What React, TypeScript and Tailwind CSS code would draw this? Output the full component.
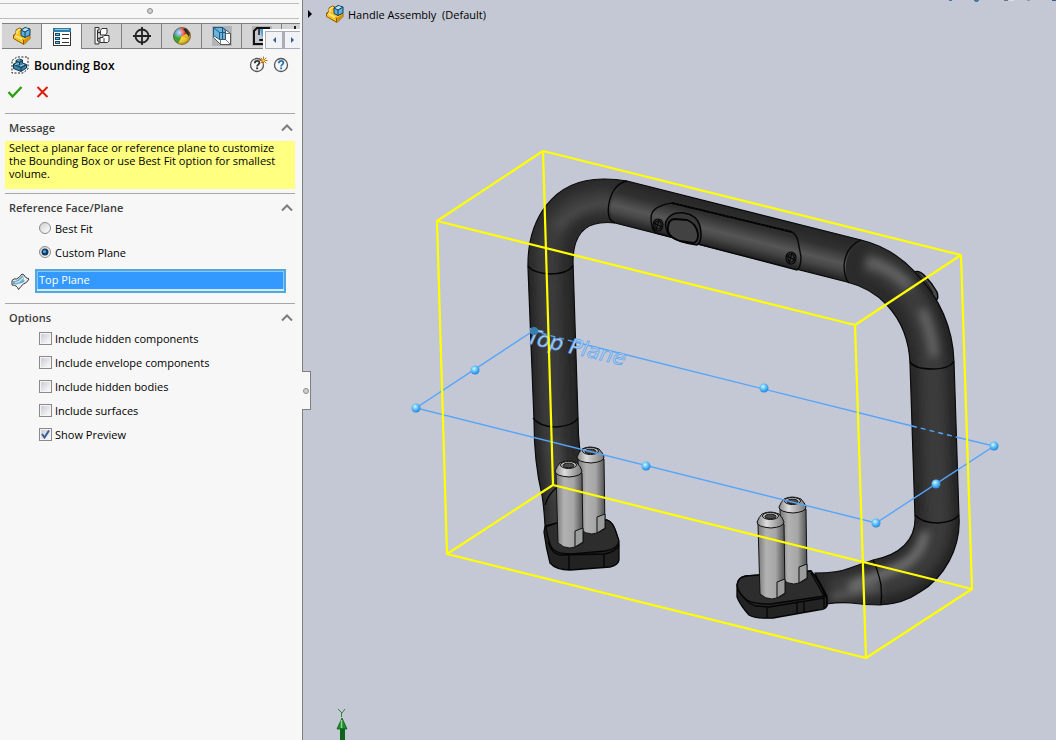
import { useState } from 'react'
import type { ReactNode } from 'react'

const PartIcon = () => (
  <svg className="w-5 h-5" viewBox="0 0 20 20" strokeLinejoin="round">
    <path d="M1.500 9 4 7.500V4L7.500 2 10 3v6l8 .5v3L12 18.500 1.500 12.500z" fill="#fcc41c" stroke="#8a5c08" />
    <path d="M2 9l9.500 5v4" fill="none" stroke="#8a5c08" />
    <path d="M12 14l5.500-4v2.500L12 17.500z" fill="#d8900c" />
    <path d="M3 9.500l7.500 4M5 8V5l3-2" fill="none" stroke="#ffe98a" strokeWidth="1.500" />
    <path d="M9 4 13 1.500 18 3v6L13 11.500 9 9.500z" fill="#5fb0dc" stroke="#123f5c" />
    <path d="M9.500 4.500 13.500 2l4 1.500-4.500 2z" fill="#b9e2f5" />
    <path d="M9 4l4 2 5-3M13 6v5.500" fill="none" stroke="#123f5c" />
  </svg>
)

const PropertyIcon = () => (
  <svg className="w-5 h-5" viewBox="0 0 20 20" shapeRendering="crispEdges">
    <rect x="1.500" y="1.500" width="17" height="17" fill="#fff" stroke="#333" />
    <rect x="1" y="1" width="18" height="4" fill="#2e7ea8" />
    <path d="M3 2.500h14" stroke="#8fc6e0" />
    <path d="M3.500 6.500h4v2h-4zM3.500 10.500h4v2h-4zM3.500 14.500h4v2h-4z" fill="#6fb4d6" stroke="#15506f" />
    <path d="M10 7.500h7M10 11.500h7M10 15.500h7" stroke="#333" />
  </svg>
)

const ConfigIcon = () => (
  <svg className="w-5 h-5" viewBox="0 0 20 20" fill="#fff" stroke="#333">
    <path d="M3 1.500h4v2.500H5.500V15H7v3H3z" fill="#eee" />
    <path d="M5.500 6.500h4M5.500 12.500h4" fill="none" strokeWidth="1.500" />
    <path d="M8.500 4.500 10 2.500h5v4.500L13.500 9h-5z" />
    <path d="M10.500 11l1.500-1.500h5V15l-1.500 1.500h-5z" />
    <path d="M8 11.500h3l1 1v4H8z" />
  </svg>
)

const TargetIcon = () => (
  <svg className="w-5 h-5" viewBox="0 0 20 20" fill="none" stroke="#222" strokeWidth="1.800">
    <circle cx="10" cy="10" r="6.500" />
    <path d="M10 1v18M1 10h18" />
  </svg>
)

const AppearanceIcon = () => (
  <svg className="w-5 h-5" viewBox="0 0 20 20">
    <defs>
      <radialGradient id="shine" cx=".35" cy=".3" r=".75">
        <stop offset="0" stopColor="#fff" stopOpacity=".75" />
        <stop offset=".5" stopColor="#fff" stopOpacity="0" />
        <stop offset="1" stopColor="#000" stopOpacity=".4" />
      </radialGradient>
    </defs>
    <circle cx="10" cy="10" r="8.500" fill="#e02020" />
    <path d="M10 10 1.500 8A8.500 8.500 0 0 0 6 17.500z" fill="#2fa02f" />
    <path d="M10 10 6 17.500A8.500 8.500 0 0 0 18 13z" fill="#f4d020" />
    <path d="M10 10 1.500 9A8.500 8.500 0 0 1 8 1.700z" fill="#2d7fc4" />
    <path d="M10 10l8 3a8.500 8.500 0 0 0 0-7z" fill="#e8b81c" />
    <path d="M10 9 8 1.700A8.500 8.500 0 0 1 16 4z" fill="#e23a20" />
    <path d="M11 3l3-1 4 5-1 4z" fill="#222" />
    <circle cx="10" cy="10" r="8.500" fill="url(#shine)" stroke="#6b5a30" strokeWidth=".6" />
  </svg>
)

const SectionIcon = () => (
  <svg className="w-5 h-5" viewBox="0 0 20 20" strokeLinejoin="round">
    <path d="M0 0h20v20H0z" fill="#b3b4b8" />
    <path d="M1.500 1.500h9l8 6v11h-10l-7-7z" fill="#fff" stroke="#333" strokeWidth=".8" />
    <path d="M1.500 1.500h9l3 3v9h-6l-6-4z" fill="#6db2d8" stroke="#1c5c82" />
    <path d="M1.500 1.500l6 5v7M7.500 6.500h6M10.500 1.500v12" fill="none" stroke="#1c5c82" />
    <path d="M8.500 18.500v-5h5v-6h5M13.500 13.500l5 5" fill="none" stroke="#555" strokeWidth=".8" />
  </svg>
)

const MachineIcon = () => (
  <svg className="w-5 h-5" viewBox="0 0 20 20">
    <path d="M0 0h20v20H0z" fill="#b3b4b8" />
    <path d="M18 2H5L2 5v13h12v-4H8" fill="#c3c9d0" stroke="#111" strokeWidth="2" />
    <path d="M8 3h5v4l-3 4z" fill="#4ea0d8" />
    <path d="M7 3v6M7 14h5" stroke="#111" strokeWidth="1.500" />
  </svg>
)

const BoundingIcon = () => (
  <svg className="w-[18px] h-[18px]" viewBox="0 0 18 18">
    <path d="M1 4.500 6 1h11v12l-5 4H1z" fill="none" stroke="#222" strokeDasharray="2 1.500" />
    <path d="M2.500 8 5 7V4.500L8.500 3l3 1v3l4 1.500V12L10 15.500 2.500 12.500z" fill="#3c82a8" stroke="#12384d" strokeLinejoin="round" />
    <path d="M5 5l3.500 1.500 3-2M8.500 6.500V9M3 8.500l7 3 5-2.500M10 11.500v3.500" fill="none" stroke="#12384d" />
    <path d="M4 8.500l4-1M9 10l4-1.500M6.500 4.500l2-.7" stroke="#9fd0e6" />
  </svg>
)

const HelpIcon = ({ color, spark }: { color: string; spark?: boolean }) => (
  <svg className="w-5 h-5" viewBox="0 0 20 20">
    <circle cx="9" cy="11" r="6.500" fill="#f4f6f8" stroke="#555" strokeWidth="1.300" />
    <path d="M6.800 9.300c0-3.300 4.600-3.100 4.600-.5 0 1.800-2.300 1.800-2.300 3.600" fill="none" stroke={color} strokeWidth="1.800" />
    <path d="M8.200 13.400h1.900v1.800H8.200z" fill={color} />
    {spark && (
      <>
        <path d="M15.500 2.500v8M11.500 6.500h8M12.700 3.700l5.600 5.600M18.300 3.700l-5.600 5.600" stroke="#c8741a" />
        <path d="M14.500 5.500h2v2h-2z" fill="#ffe25a" />
      </>
    )}
  </svg>
)

const FaceIcon = () => (
  <svg className="w-5 h-5" viewBox="0 0 20 20" strokeLinejoin="round">
    <path d="M2 9.500Q4 7 6.500 8Q9 7 12 3L14 4Q15 7 19 8Q17 12 13.500 13Q11 15 8.500 18.500Q7 14 2 14z" fill="#e9eff2" stroke="#333" />
    <path d="M3 10Q6 10 8 8.500Q10 6 12.500 4.500L13.500 6Q13 9 15 10Q12 13 9 12.500Q7 14 3 13z" fill="#6faac8" />
    <path d="M5 11.500Q9 12 13 6.500" fill="none" stroke="#b7dcec" strokeWidth="1.500" />
  </svg>
)

const tabs = [
  { name: 'FeatureManager', icon: <PartIcon /> },
  { name: 'PropertyManager', icon: <PropertyIcon /> },
  { name: 'ConfigurationManager', icon: <ConfigIcon /> },
  { name: 'DimXpertManager', icon: <TargetIcon /> },
  { name: 'DisplayManager', icon: <AppearanceIcon /> },
  { name: 'Section', icon: <SectionIcon /> },
  { name: 'CAM', icon: <MachineIcon /> },
]

const Section = ({ title, children }: { title: string; children: ReactNode }) => {
  const [open, setOpen] = useState(true)

  return (
    <section className="ml-[5px] mr-[7px] border-t border-[#a8a8a8]">
      <button
        type="button"
        onClick={() => setOpen(!open)}
        aria-expanded={open}
        className="flex h-[27px] w-full items-center justify-between pl-1 pr-0.5 text-[11px] font-semibold text-[#3c3c3c]"
      >
        {title}
        <svg className={`w-3 h-3 ${open ? '' : 'rotate-180'}`} viewBox="0 0 12 12" fill="none" stroke="#7c7c7c" strokeWidth="2">
          <path d="M1 8.500l5-5 5 5" />
        </svg>
      </button>
      {open && children}
    </section>
  )
}

const CheckRow = ({ label, defaultChecked }: { label: string; defaultChecked?: boolean }) => (
  <label className="flex h-6 items-center gap-[3px]">
    <span className="grid">
      <input
        type="checkbox"
        defaultChecked={defaultChecked}
        className="peer col-start-1 row-start-1 h-[13px] w-[13px] appearance-none border border-[#8a8a8a] bg-linear-to-br from-[#c5c9ce] to-white shadow-[inset_0_0_0_1px_#f4f4f4]"
      />
      <svg className="pointer-events-none invisible col-start-1 row-start-1 h-[13px] w-[13px] peer-checked:visible" viewBox="0 0 13 13" fill="none" stroke="#3c5a9a" strokeWidth="2">
        <path d="M3 6l2.500 3.500L10 2.500" />
      </svg>
    </span>
    {label}
  </label>
)

const PlaneRadio = ({ label, defaultChecked }: { label: string; defaultChecked?: boolean }) => (
  <label className="flex h-6 items-center gap-1">
    <span className="grid">
      <input
        type="radio"
        name="plane"
        defaultChecked={defaultChecked}
        className="peer col-start-1 row-start-1 h-3 w-3 appearance-none rounded-full border border-[#8a8a8a] bg-linear-to-br from-[#d0d0d0] to-white"
      />
      <svg className="pointer-events-none invisible col-start-1 row-start-1 h-3 w-3 peer-checked:visible" viewBox="0 0 12 12">
        <circle cx="6" cy="6" r="3.500" fill="#123a66" />
        <circle cx="5.500" cy="5.500" r="1.500" fill="#55b0e6" />
      </svg>
    </span>
    {label}
  </label>
)

const Pin = ({ x, y, height }: { x: number; y: number; height: number }) => (
  <g transform={`translate(${x} ${y})`} stroke="#111" strokeLinejoin="round">
    <path d={`M1 12L3 ${height - 4}Q14 ${height + 6} 28 ${height - 4}L27 12z`} fill="url(#steel)" />
    <path d={`M20 ${height - 16}l8-3v14l-8 5z`} fill="#9b9d9d" strokeWidth="1" />
    <path d="M0 10Q2 5 5 2Q13-2 22 2Q26 6 27 10Q27 15 14 16Q0 15 0 10z" fill="url(#steelTop)" />
    <ellipse cx="13.500" cy="4" rx="8" ry="3.500" fill="#c4c4c4" />
    <ellipse cx="13.500" cy="4.500" rx="5.500" ry="2.300" fill="#4b4b4b" />
  </g>
)

const Screw = ({ x, y }: { x: number; y: number }) => (
  <g transform={`translate(${x} ${y})`} fill="none" stroke="#080808" strokeWidth="1.200">
    <ellipse rx="5" ry="6" fill="#3a3a3a" />
    <ellipse rx="3.200" ry="4" />
    <path d="M-4-2l8 4M-2 5l3-10" />
  </g>
)

const tubePath =
  'M528 268C527 222 551 178 605 179Q616 179 627 181L861 240C882 245 900 256 915 272C938 296 953 326 954 362L959 517C961 548 944 578 920 592Q903 604 880 605Q866 605 851 603Q839 602 827 604L815 573Q838 573 850 568Q864 563 873 560C900 555 916 540 915 517L910 363C909 337 899 318 887 305Q871 288 847 282L615 223Q608 222 600 223C583 225 573 238 573 262L578 418Q578 435 580 452L580 530H550L545 525Q544 508 542 495Q534 463 534 420z'

const points = [
  [416, 408], [475, 370], [646, 466], [764, 388], [876, 523], [936, 484], [994, 446],
]

const Model = () => (
  <svg className="h-full w-full" viewBox="303 0 753 740" preserveAspectRatio="xMinYMin meet" role="img" aria-label="Handle assembly with bounding box">
    <defs>
      <linearGradient id="steel">
        <stop offset="0" stopColor="#777" />
        <stop offset=".3" stopColor="#b2b2b2" />
        <stop offset=".65" stopColor="#a6a6a6" />
        <stop offset="1" stopColor="#505050" />
      </linearGradient>
      <linearGradient id="steelTop">
        <stop offset="0" stopColor="#888" />
        <stop offset=".35" stopColor="#ddd" />
        <stop offset="1" stopColor="#777" />
      </linearGradient>
      <linearGradient id="bar" gradientUnits="userSpaceOnUse" x1="745" y1="211" x2="734" y2="254">
        <stop offset="0" stopColor="#262626" />
        <stop offset=".3" stopColor="#303030" />
        <stop offset=".6" stopColor="#565656" />
        <stop offset=".75" stopColor="#474747" />
        <stop offset="1" stopColor="#1e1e1e" />
      </linearGradient>
      <radialGradient id="ball" cx=".4" cy=".35" r=".65">
        <stop offset="0" stopColor="#d4f6ff" />
        <stop offset=".45" stopColor="#68c4fa" />
        <stop offset="1" stopColor="#2186dc" />
      </radialGradient>
      <clipPath id="tube">
        <path d={tubePath} />
      </clipPath>
      <filter id="soft" x="-50%" y="-50%" width="200%" height="200%">
        <feGaussianBlur stdDeviation="4" />
      </filter>
    </defs>

    {/* toolbar icon bottoms */}
    <path d="M949 0h3M974 0h5M975 1h3" stroke="#3e7d9f" strokeWidth="2" />
    <path d="M1004 0h4" stroke="#777" strokeWidth="2" />
    <path d="M1009 0h5" stroke="#dedede" strokeWidth="2" />
    <path d="M1027 0h3" stroke="#999" strokeWidth="2" />
    <path d="M1052 0h4" stroke="#3d5a8c" strokeWidth="2" />

    {/* side button behind the right bend */}
    <path d="M914 272q5-2 10 3q8 8 13 17q2 7-1 8z" fill="#494949" stroke="#080808" strokeWidth="1.500" />
    <path d="M918 273q9 8 15 20" fill="none" stroke="#111" />

    {/* tube */}
    <path d={tubePath} fill="#2b2b2b" />
    <g clipPath="url(#tube)">
      <g fill="none" filter="url(#soft)">
        <path d="M555 540L548 262C547 222 572 200 604 201L620 203M865 262C905 272 928 310 932 365L938 517C938 550 915 580 880 582L830 590" stroke="#3b3b3b" strokeWidth="24" />
        <path d="M556 230Q570 207 604 203L622 206" stroke="#4a4a4a" strokeWidth="8" />
        <path d="M866 262Q890 266 910 287" stroke="#686868" strokeWidth="8" />
        <path d="M922 310Q933 335 934 356" stroke="#6a6a6a" strokeWidth="7" />
        <path d="M924 532Q921 557 895 568L850 587" stroke="#747474" strokeWidth="8" />
        <path d="M830 598L880 588" stroke="#626262" strokeWidth="5" />
        <path d="M553 440L562 500" stroke="#4a4a4a" strokeWidth="10" />
        <path d="M528 268L534 420L545 525M573 255L580 450M910 363L915 517M954 362L959 517" stroke="#222" strokeWidth="8" />
        <path d="M959 517C961 548 944 578 920 592Q903 604 880 605M954 362C953 326 938 296 915 272" stroke="#202020" strokeWidth="10" />
      </g>
      <path d="M627 181L861 240Q841 255 847 282L615 223Q602 205 627 181z" fill="url(#bar)" />
    </g>
    <path d={tubePath} fill="none" stroke="#0b0b0b" strokeWidth="1.200" />
    <g fill="none" stroke="#050505" strokeWidth="1.300">
      <path d="M528 266Q533 273 550 274Q567 274 573 266" />
      <path d="M627 181Q613 184 609 203Q606 220 615 223" />
      <path d="M861 240Q846 246 844 265Q844 278 849 283" />
      <path d="M910 362Q915 369 932 369Q950 369 954 361" />
      <path d="M915 515Q922 523 938 523Q954 522 959 515" />
      <path d="M533 418Q540 427 556 427Q573 426 578 418" />
      <path d="M873 560Q878 570 881 585Q882 596 881 605" />
      <path d="M545 505Q548 495 556 488" />
    </g>

    {/* switch plate */}
    <path d="M651 218Q651 206 672 203L792 232Q796 234 798 241L801 257Q801 267 797 270L656 233Q651 229 651 218z" fill="url(#bar)" stroke="#090909" strokeWidth="1.400" />
    <path d="M672 203L792 232" stroke="#050505" strokeWidth="2" strokeDasharray="3 1" />
    <path d="M666 228Q664 222 669 217Q674 212 684 213Q697 215 700 226Q703 241 697 245Q678 243 668 234z" fill="#383838" stroke="#060606" strokeWidth="1.500" />
    <path d="M668 231Q667 220 674 219L687 220Q696 223 698 234Q698 243 693 243L680 241Q670 238 668 231z" fill="#424242" stroke="#040404" strokeWidth="1.800" />
    <Screw x={658} y={225} />
    <Screw x={791} y={258} />

    {/* left foot */}
    <g stroke="#050505" strokeWidth="1.300" strokeLinejoin="round">
      <path d="M545 526L557 523L607 520Q613 522 616 532L619 543V560Q618 565 610 567L570 570Q556 570 550 563Q546 548 544 532z" fill="#222" />
      <path d="M546 527L557 523L607 520Q613 522 616 532L619 541Q618 549 605 551L572 554Q559 554 554 550Q549 546 546 527z" fill="#2d2d2d" />
      <path d="M548 542Q552 554 560 555L605 554Q617 551 619 545M569 555V570M604 554V567" fill="none" />
    </g>
    <Pin x={577} y={447} height={86} />
    <Pin x={555} y={461} height={86} />

    {/* right foot */}
    <g stroke="#050505" strokeWidth="1.300" strokeLinejoin="round">
      <path d="M737 585Q738 577 746 576L811 571Q823 585 827 599V606Q825 610 818 610L773 618Q755 619 749 615Q740 605 737 597z" fill="#232323" />
      <path d="M737 585Q738 577 746 576L811 571Q821 584 825 596L770 604Q754 604 747 600Q738 593 737 585z" fill="#2d2d2d" />
      <path d="M738 590Q746 603 755 606L769 607L824 598M767 606V618M797 602V614M804 601V613M811 573L824 596V608M815 574L827 596V606" fill="none" />
    </g>
    <Pin x={779} y={497} height={86} />
    <Pin x={757} y={512} height={86} />

    {/* top plane */}
    <g fill="none" stroke="#54a5fb" strokeWidth="1.400">
      <path d="M575 342L912 426M956 437L994 446L876 523L416 408L533 331" />
      <path d="M533 331L575 342M912 426L956 437" strokeDasharray="5 4" />
    </g>
    <text
      transform="translate(526 343) rotate(13)"
      fontFamily="DejaVu Sans, sans-serif"
      fontSize="21"
      fontStyle="italic"
      fill="#b9cfe9"
      stroke="#5aa3ee"
      strokeWidth=".7"
    >
      Top Plane
    </text>
    <circle cx="534" cy="331" r="4" fill="#397fae" />

    {/* bounding box */}
    <path
      d="M543 151L437 221L855 325L961 255zM553 485L447 554L866 658L972 589zM543 151L553 485M437 221L447 554M855 325L866 658M961 255L972 589"
      fill="none"
      stroke="#ff0"
      strokeWidth="2.200"
      strokeLinejoin="round"
    />
    {points.map(([x, y]) => (
      <circle key={x} cx={x} cy={y} r="4.500" fill="url(#ball)" />
    ))}

    {/* origin triad */}
    <path d="M338 709l4 4 3-4M341.500 713v4" fill="none" stroke="#2a8a34" />
    <path d="M340 729h5v11h-5z" fill="#0b6418" />
    <path d="M342 718l5 11h-10z" fill="#1d8a2c" stroke="#0b5a16" strokeWidth=".8" />
    <path d="M341.500 720v8" stroke="#8fd88f" strokeWidth="1.500" />
  </svg>
)

export default function App() {
  const [activeTab, setActiveTab] = useState('PropertyManager')

  return (
    <div className="flex h-screen bg-[#c4c8d4] font-['Open_Sans','Noto_Sans',sans-serif] text-[11px] leading-[13px] text-black">
      <aside className="w-[303px] shrink-0 border-r border-[#7f7f7f] bg-[#f7f7f7]">
        <div className="mr-[3px] h-1 border-b border-[#bcbcbc]" />
        <div className="mr-[3px] flex h-[15px] items-center justify-center border-b border-[#bcbcbc]">
          <span className="h-1.5 w-1.5 rounded-full border border-[#8c8c8c] bg-[#d0d0d0]" />
        </div>

        <div className="relative ml-0.5 mr-0.5 mt-1 overflow-hidden">
          <div role="tablist" className="flex">
            {tabs.map(tab => (
              <button
                key={tab.name}
                type="button"
                role="tab"
                aria-label={tab.name}
                aria-selected={activeTab === tab.name}
                onClick={() => setActiveTab(tab.name)}
                className={`flex h-[26px] w-10 shrink-0 items-center justify-center border-r border-t border-[#808080] ${activeTab === tab.name ? 'bg-[#f7f7f7]' : 'border-b bg-[#d4d4d4]'}`}
              >
                {tab.icon}
              </button>
            ))}
            <div className="flex h-[26px] w-10 shrink-0 border-b border-t border-[#808080] bg-[#d4d4d4] pl-3 pt-0.5">
              <span className="h-2 w-0.5 bg-[#222]" />
            </div>
          </div>
          <div className="absolute right-0 top-1.5 flex h-5 border-l-2 border-t-2 border-white bg-[#a9adb8]">
            <button type="button" aria-label="Previous tabs" className="mr-px flex w-[18px] items-center justify-center border border-[#a9adb8] bg-[#f1f2f5]">
              <svg className="h-1.5 w-1" viewBox="0 0 4 6" fill="#3b5b94"><path d="M4 0v6L1 3z" /></svg>
            </button>
            <button type="button" aria-label="Next tabs" className="flex w-4 items-center justify-center border border-r-0 border-[#a9adb8] bg-[#f1f2f5]">
              <svg className="h-1.5 w-1" viewBox="0 0 4 6" fill="#3b5b94"><path d="M0 0v6l3-3z" /></svg>
            </button>
          </div>
        </div>

        <header className="flex h-8 items-center pl-[11px] pr-2.5">
          <BoundingIcon />
          <h1 className="ml-[5px] flex-1 text-[12px] font-semibold text-black">Bounding Box</h1>
          <button type="button" aria-label="What's new" className="mr-1 pb-0.5">
            <HelpIcon color="#333" spark />
          </button>
          <button type="button" aria-label="Help" className="pb-0.5">
            <HelpIcon color="#2a73ac" />
          </button>
        </header>

        <div className="flex h-8 items-start gap-3 pl-[7px] pt-[3px]">
          <button type="button" aria-label="OK">
            <svg className="h-4 w-4" viewBox="0 0 16 16" fill="none" stroke="#2f9e12" strokeWidth="2.400">
              <path d="M1.500 8l4 4.500L14.500 3" />
            </svg>
          </button>
          <button type="button" aria-label="Cancel">
            <svg className="h-4 w-4" viewBox="0 0 16 16" fill="none" stroke="#d81e0c" strokeWidth="2">
              <path d="M2.500 3l10 10M12.500 3l-10 10" />
            </svg>
          </button>
        </div>

        <Section title="Message">
          <p className="mb-1 h-12 bg-[#ffff80] px-1">
            Select a planar face or reference plane to customize the Bounding Box or use Best Fit option for smallest volume.
          </p>
        </Section>

        <Section title="Reference Face/Plane">
          <div className="-mt-[5px] pl-[34px]">
            <PlaneRadio label="Best Fit" />
            <PlaneRadio label="Custom Plane" defaultChecked />
          </div>
          <div className="mb-2.5 mt-[5px] flex items-center gap-[5px] pl-[5px] pr-[9px]">
            <FaceIcon />
            <div className="flex-1 border-2 border-[#4fa9e0] bg-[#d5e9fb]">
              <input
                readOnly
                aria-label="Reference plane"
                value="Top Plane"
                className="mb-0.5 block h-[18px] w-full border-x border-t border-[#8cc6f4] bg-[#3399ff] px-px pb-0.5 text-white outline-none"
              />
            </div>
          </div>
        </Section>

        <Section title="Options">
          <div className="-mt-[5px] pl-[34px]">
            <CheckRow label="Include hidden components" />
            <CheckRow label="Include envelope components" />
            <CheckRow label="Include hidden bodies" />
            <CheckRow label="Include surfaces" />
            <CheckRow label="Show Preview" defaultChecked />
          </div>
        </Section>
      </aside>

      <main className="relative min-w-0 flex-1">
        <Model />
        <div className="absolute left-1 top-1 flex h-5 items-center">
          <button type="button" aria-label="Expand tree">
            <svg className="h-2 w-1.5" viewBox="0 0 6 8"><path d="M1 0v8l4-4z" /></svg>
          </button>
          <span className="ml-3 mr-[3px]">
            <PartIcon />
          </span>
          <span className="whitespace-pre">Handle Assembly  (Default)</span>
        </div>
        <button
          type="button"
          aria-label="Collapse panel"
          className="absolute -left-px top-[371px] flex h-[39px] w-[9px] items-center justify-center border border-l-0 border-[#7f7f7f] bg-[#f7f7f7]"
        >
          <span className="h-1.5 w-1.5 rounded-full border border-[#8c8c8c] bg-[#d0d0d0]" />
        </button>
      </main>
    </div>
  )
}
